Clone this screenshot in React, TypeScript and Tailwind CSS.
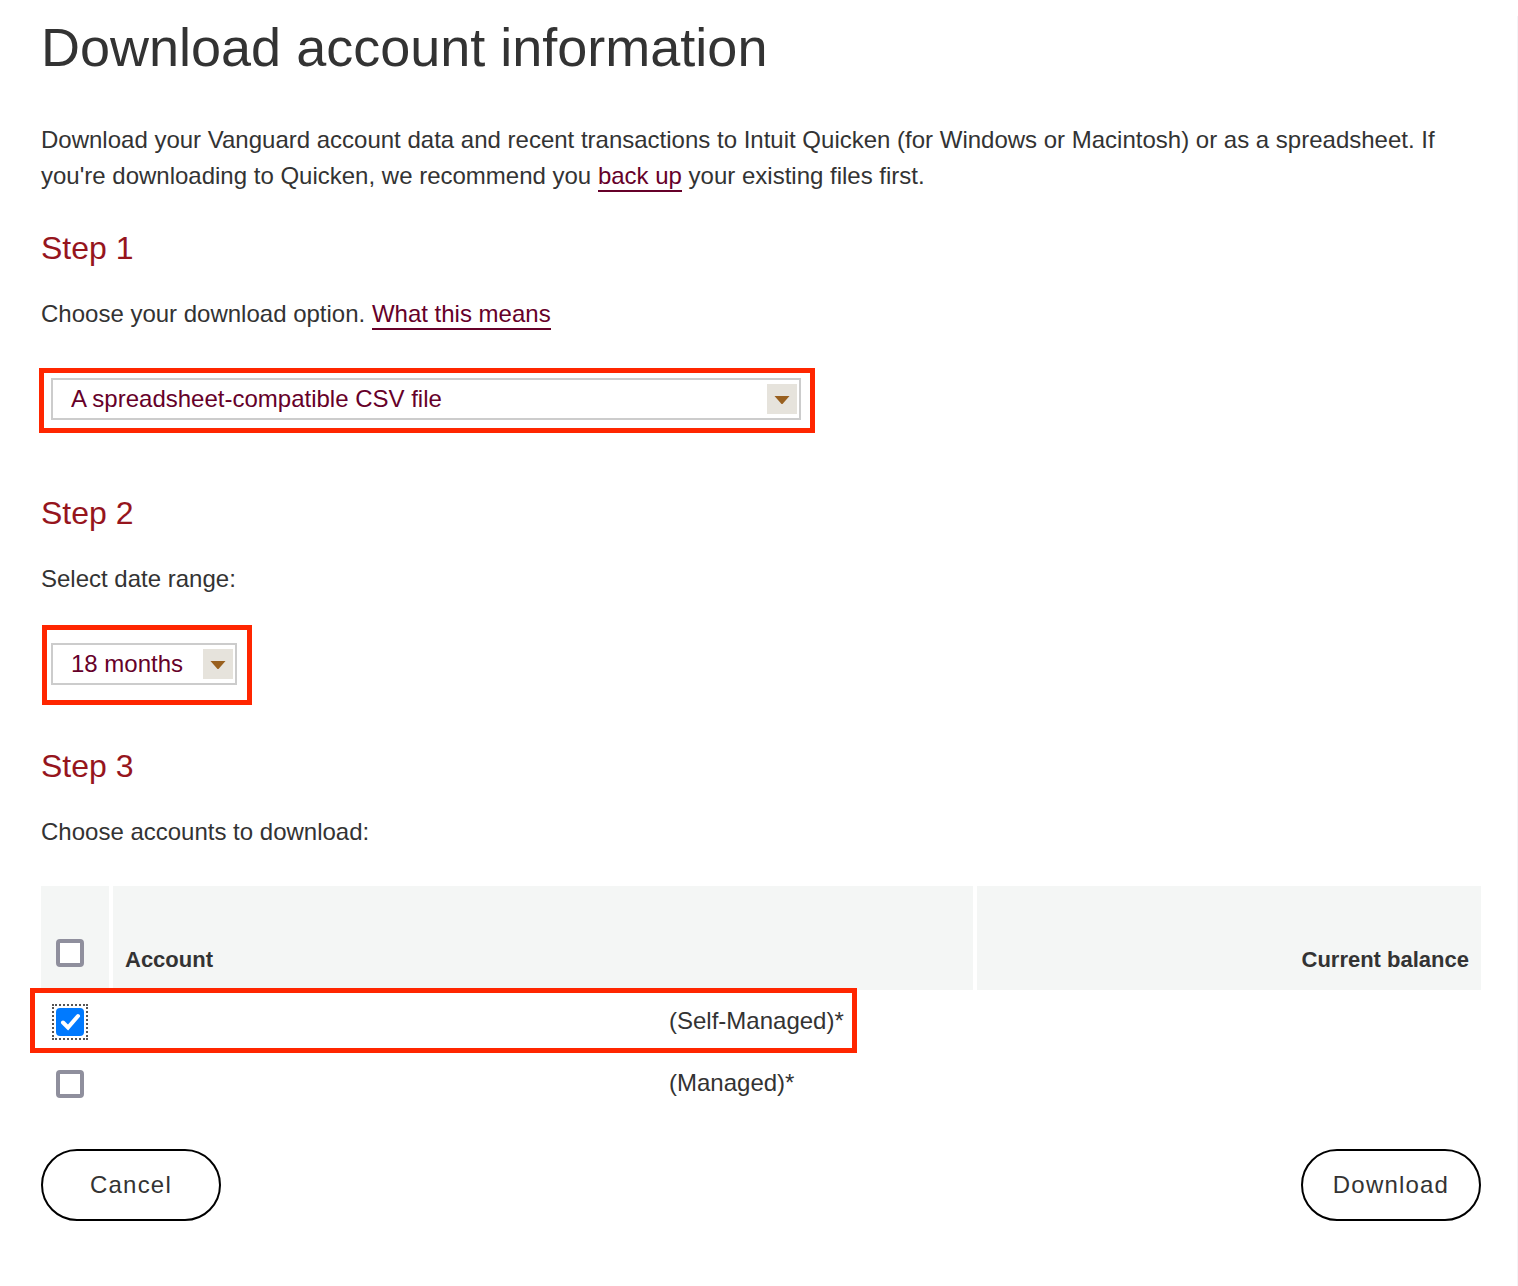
import { useState } from "react";
import type { ReactNode } from "react";

const DOWNLOAD_OPTIONS = ["A spreadsheet-compatible CSV file", "Quicken (Windows)", "Quicken (Macintosh)"];
const DATE_RANGES = ["18 months", "12 months", "6 months", "1 month"];
const ACCOUNTS = [
  { id: "self", label: "(Self-Managed)*", highlighted: true },
  { id: "managed", label: "(Managed)*", highlighted: false },
];

function StepHeading({ children, className }: { children: ReactNode; className: string }) {
  return <h2 className={`text-[32px] leading-10 text-[#96151d] ${className}`}>{children}</h2>;
}

function TextLink({ children }: { children: ReactNode }) {
  return (
    <a href="#" className="border-b-2 border-[#660029] pb-px text-[#660029]">
      {children}
    </a>
  );
}

function Dropdown({ id, options, className, highlight }: { id: string; options: string[]; className: string; highlight: string }) {
  return (
    <div className={`relative ml-2.5 h-[42px] max-w-full ${className}`}>
      <select
        id={id}
        className="block h-full w-full appearance-none border-2 border-[#cccccc] bg-white pr-9 pl-[18px] text-2xl leading-9 text-[#660029]"
      >
        {options.map((option) => (
          <option key={option}>{option}</option>
        ))}
      </select>
      <svg viewBox="0 0 30 30" className="pointer-events-none absolute top-1.5 right-1 size-[30px]" aria-hidden="true">
        <rect width="30" height="30" fill="#e6e3dc" />
        <path d="M7.5 12 H22.5 L15.5 20 H14.5 Z" fill="#99601f" />
      </svg>
      <span className={`pointer-events-none absolute border-5 border-[#ff2600] ${highlight}`} />
    </div>
  );
}

function Checkbox({ label, checked, onChange, outlined }: { label: string; checked: boolean; onChange: () => void; outlined?: boolean }) {
  return (
    <span className={`relative block size-7 ${outlined ? "outline-2 outline-offset-2 outline-dotted outline-[#555555]" : ""}`}>
      <input
        type="checkbox"
        aria-label={label}
        checked={checked}
        onChange={onChange}
        className="block size-7 appearance-none rounded border-4 border-[#8f8f9d] bg-white checked:border-[#007aff] checked:bg-[#007aff]"
      />
      {checked && (
        <svg viewBox="0 0 28 28" className="pointer-events-none absolute inset-0 size-7" aria-hidden="true">
          <path d="M7 14.5 L12 19.5 L22 8" fill="none" stroke="#fff" strokeWidth="4" strokeLinecap="round" strokeLinejoin="miter" />
        </svg>
      )}
    </span>
  );
}

function PillButton({ children }: { children: ReactNode }) {
  return (
    <button type="button" className="h-[72px] w-[180px] rounded-full border-2 border-black bg-white text-2xl tracking-wider">
      {children}
    </button>
  );
}

export default function App() {
  const [selected, setSelected] = useState<string[]>(["self"]);
  const all = selected.length === ACCOUNTS.length;
  const toggle = (id: string) =>
    setSelected((ids) => (ids.includes(id) ? ids.filter((other) => other !== id) : [...ids, id]));

  return (
    <div className="bg-white pt-4">
      <main className="min-h-[calc(100vh-16px)] border-r border-[#f4f4f7] pr-9 pl-[41px] font-['Liberation_Sans',Arial,sans-serif] text-2xl leading-9 text-[#333333]">
        <h1 className="text-[54px] leading-[62px]">Download account information</h1>
        <p className="mt-11">
          Download your Vanguard account data and recent transactions to Intuit Quicken (for Windows or Macintosh) or as a
          spreadsheet. If you're downloading to Quicken, we recommend you <TextLink>back up</TextLink> your existing files
          first.
        </p>

        <StepHeading className="mt-[34px]">Step 1</StepHeading>
        <p className="mt-7 mb-[46px]">
          <label htmlFor="option">Choose your download option.</label> <TextLink>What this means</TextLink>
        </p>
        <Dropdown id="option" options={DOWNLOAD_OPTIONS} className="w-[750px]" highlight="-top-2.5 -right-3.5 -bottom-[13px] -left-3" />

        <StepHeading className="mt-[73px]">Step 2</StepHeading>
        <p className="mt-7 mb-[46px]">
          <label htmlFor="range">Select date range:</label>
        </p>
        <Dropdown id="range" options={DATE_RANGES} className="w-[186px]" highlight="-top-[18px] -right-[15px] -bottom-5 -left-[9px]" />

        <StepHeading className="mt-[61px]">Step 3</StepHeading>
        <p className="mt-7">Choose accounts to download:</p>

        <table className="mt-9 w-full table-fixed border-collapse">
          <thead>
            <tr className="h-[104px] text-[22px] leading-8">
              <th scope="col" className="w-[5%] p-0">
                <div className="mr-1 flex h-[104px] items-end bg-[#f4f6f5] pb-[23px] pl-[15px]">
                  <Checkbox
                    label="Select all accounts"
                    checked={all}
                    onChange={() => setSelected(all ? [] : ACCOUNTS.map((account) => account.id))}
                  />
                </div>
              </th>
              <th scope="col" className="w-[60%] p-0">
                <div className="mr-1 flex h-[104px] items-end bg-[#f4f6f5] px-3 pb-3.5">Account</div>
              </th>
              <th scope="col" className="w-[35%] p-0">
                <div className="flex h-[104px] items-end justify-end bg-[#f4f6f5] px-3 pb-3.5">Current balance</div>
              </th>
            </tr>
          </thead>
          <tbody>
            {ACCOUNTS.map((account) => (
              <tr key={account.id} className="relative h-[62px]">
                <td className="p-0 pt-0.5 pl-[15px]">
                  <Checkbox
                    label={account.label}
                    checked={selected.includes(account.id)}
                    onChange={() => toggle(account.id)}
                    outlined={account.highlighted}
                  />
                  {account.highlighted && (
                    <span className="pointer-events-none absolute -top-0.5 -left-[11px] h-[65px] w-[827px] border-5 border-[#ff2600]" />
                  )}
                </td>
                <td className="p-0 px-3">
                  <div className="flex">
                    <span className="w-[544px]" />
                    {account.label}
                  </div>
                </td>
                <td className="p-0" />
              </tr>
            ))}
          </tbody>
        </table>

        <div className="mt-[35px] flex justify-between pb-16">
          <PillButton>Cancel</PillButton>
          <PillButton>Download</PillButton>
        </div>
      </main>
    </div>
  );
}
